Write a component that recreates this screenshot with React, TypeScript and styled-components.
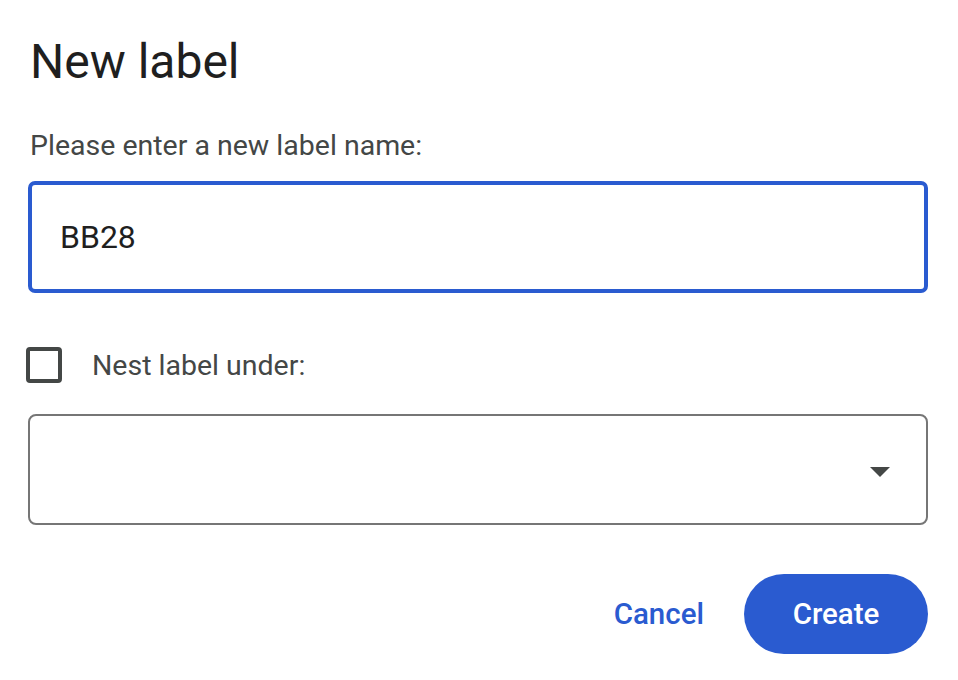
import React from "react";
import styled, { createGlobalStyle } from "styled-components";

const Global = createGlobalStyle`
  html, body { margin: 0; padding: 0; background: #ffffff; }
  body { font-family: Roboto, "Liberation Sans", Arial, sans-serif; }
`;

const Dialog = styled.div`
  width: 900px;
  padding: 34px 30px 0 28px;
  display: flex;
  flex-direction: column;
`;

const Title = styled.h1`
  margin: 0 0 0 2px;
  font-size: 48px;
  line-height: 56px;
  font-weight: 400;
  color: #1f1f1f;
`;

const Prompt = styled.div`
  margin: 38px 0 0 2px;
  font-size: 28.5px;
  line-height: 36px;
  color: #444746;
`;

const TextInput = styled.div`
  margin-top: 17px;
  height: 112px;
  box-sizing: border-box;
  border: 4px solid #2a5bd0;
  border-radius: 7px;
  display: flex;
  align-items: center;
  padding-left: 28px;
  font-size: 32px;
  color: #1f1f1f;
`;

const CheckRow = styled.label`
  margin-top: 54px;
  display: flex;
  align-items: center;
  gap: 30px;
  margin-left: -2px;
  font-size: 28.5px;
  color: #444746;
`;

const Box = styled.span`
  width: 36px;
  height: 36px;
  box-sizing: border-box;
  border: 4px solid #444746;
  border-radius: 4px;
`;

const Select = styled.div`
  margin-top: 31px;
  height: 111px;
  box-sizing: border-box;
  border: 2px solid #767676;
  border-radius: 8px;
  display: flex;
  align-items: center;
  justify-content: flex-end;
  padding-right: 36px;
`;

const Arrow = styled.span`
  width: 0;
  height: 0;
  border-left: 10px solid transparent;
  border-right: 10px solid transparent;
  border-top: 10px solid #444746;
  margin-top: 4px;
`;

const Actions = styled.div`
  margin-top: 49px;
  display: flex;
  justify-content: flex-end;
  align-items: center;
  gap: 40px;
`;

const TextButton = styled.button`
  border: none;
  background: none;
  padding: 0;
  font-family: inherit;
  font-size: 29.5px;
  font-weight: 500;
  color: #2a5bd0;
`;

const FilledButton = styled.button`
  border: none;
  width: 184px;
  height: 80px;
  border-radius: 40px;
  background: #2a5bd0;
  color: #ffffff;
  font-family: inherit;
  font-size: 29.5px;
  font-weight: 500;
`;

export default function App() {
  return (
    <>
      <Global />
      <Dialog>
        <Title>New label</Title>
        <Prompt>Please enter a new label name:</Prompt>
        <TextInput>BB28</TextInput>
        <CheckRow>
          <Box />
          Nest label under:
        </CheckRow>
        <Select>
          <Arrow />
        </Select>
        <Actions>
          <TextButton>Cancel</TextButton>
          <FilledButton>Create</FilledButton>
        </Actions>
      </Dialog>
    </>
  );
}
